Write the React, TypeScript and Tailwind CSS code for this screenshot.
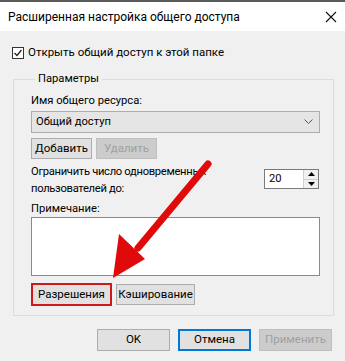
import React from "react";

const font = { fontFamily: 'Roboto, "Noto Sans", sans-serif' };

const Btn = ({ label, w, disabled = false, className = "" }: { label: string; w: string; disabled?: boolean; className?: string }) => (
  <div
    className={`flex items-center justify-center border text-[11.5px] ${w} ${
      disabled ? "bg-[#cccccc] border-[#bfbfbf] text-[#a0a0a0]" : "bg-[#e1e1e1] border-[#adadad] text-black"
    } ${className}`}
  >
    {label}
  </div>
);

export default function App() {
  return (
    <div className="w-[345px] h-[361px] bg-[#f0f0f0] overflow-hidden relative text-[11.2px]" style={font}>
      {/* title bar */}
      <div className="h-[31px] bg-white border-t-2 border-[#5a5a5a] flex items-center justify-between pl-[8px] pr-[7px]">
        <span className="text-[12px] text-black">Расширенная настройка общего доступа</span>
        <svg width="12" height="12" viewBox="0 0 12 12" className="mr-[1px]">
          <path d="M1 1 L11 11 M11 1 L1 11" stroke="#111" strokeWidth="1.1" />
        </svg>
      </div>

      <div className="pl-[12px] pr-[12px] pt-[15px]">
        <div className="flex items-center gap-[4px] h-[14px]">
          <div className="w-[12px] h-[12px] border border-[#333] bg-white flex items-center justify-center">
            <svg width="10" height="10" viewBox="0 0 10 10">
              <path d="M1.5 5 L4 7.5 L8.5 2" fill="none" stroke="#222" strokeWidth="1.3" />
            </svg>
          </div>
          <span className="text-[11.5px] text-black">Открыть общий доступ к этой папке</span>
        </div>

        <fieldset className="mt-[11px] ml-[1px] w-[321px] h-[245px] border border-[#dcdcdc] pl-[17px] pr-[13px]">
          <legend className="ml-[4px] px-[3px] leading-[16px] text-black">Параметры</legend>
          <div className="leading-[16px] mt-[6px] text-black">Имя общего ресурса:</div>
          <div className="mt-[2px] h-[22px] bg-[#e5e5e5] border border-[#acacac] flex items-center justify-between pl-[4px] pr-[6px]">
            <span className="text-black">Общий доступ</span>
            <svg width="9" height="6" viewBox="0 0 9 6">
              <path d="M0.5 0.5 L4.5 4.5 L8.5 0.5" fill="none" stroke="#555" strokeWidth="1" />
            </svg>
          </div>
          <div className="flex gap-[4px] mt-[5px] h-[21px]">
            <Btn label="Добавить" w="w-[61px]" />
            <Btn label="Удалить" w="w-[61px]" disabled />
          </div>
          <div className="flex justify-between mt-[4px]">
            <div className="leading-[17px] text-black tracking-[-0.3px]">
              Ограничить число одновременных
              <br />
              пользователей до:
            </div>
            <div className="mt-[6px] mr-[1px] w-[55px] h-[20px] bg-white border border-[#7a7a7a] flex">
              <div className="flex-1 pl-[4px] leading-[18px] text-black">20</div>
              <div className="w-[15px] border-l border-[#cfcfcf] bg-[#f0f0f0] flex flex-col">
                <div className="flex-1 flex items-center justify-center border-b border-[#cfcfcf]">
                  <svg width="7" height="4" viewBox="0 0 7 4"><path d="M0 4 L3.5 0 L7 4 Z" fill="#000" /></svg>
                </div>
                <div className="flex-1 flex items-center justify-center">
                  <svg width="7" height="4" viewBox="0 0 7 4"><path d="M0 0 L3.5 4 L7 0 Z" fill="#000" /></svg>
                </div>
              </div>
            </div>
          </div>
          <div className="leading-[16px] mt-[4px] text-black">Примечание:</div>
          <div className="h-[59px] bg-white border border-[#8a8a8a]" />
          <div className="flex gap-[4px] mt-[7px] items-center">
            <Btn label="Разрешения" w="w-[81px] h-[23px]" className="border-2 !border-[#d01818]" />
            <Btn label="Кэширование" w="w-[79px] h-[21px]" />
          </div>
        </fieldset>

        <div className="flex justify-end gap-[8px] mt-[13px] pr-[1px]">
          <Btn label="OK" w="w-[73px] h-[22px]" />
          <Btn label="Отмена" w="w-[73px] h-[22px]" className="border-2 !border-[#0078d7]" />
          <Btn label="Применить" w="w-[73px] h-[22px]" disabled />
        </div>
      </div>

      {/* red annotation arrow */}
      <svg className="absolute left-0 top-0 pointer-events-none" width="345" height="361" viewBox="0 0 345 361">
        <line x1="208" y1="164" x2="138" y2="248" stroke="#e00a0a" strokeWidth="7" strokeLinecap="round" />
        <path d="M113 278 L119 234 L145 259 Z" fill="#e00a0a" />
      </svg>
    </div>
  );
}
